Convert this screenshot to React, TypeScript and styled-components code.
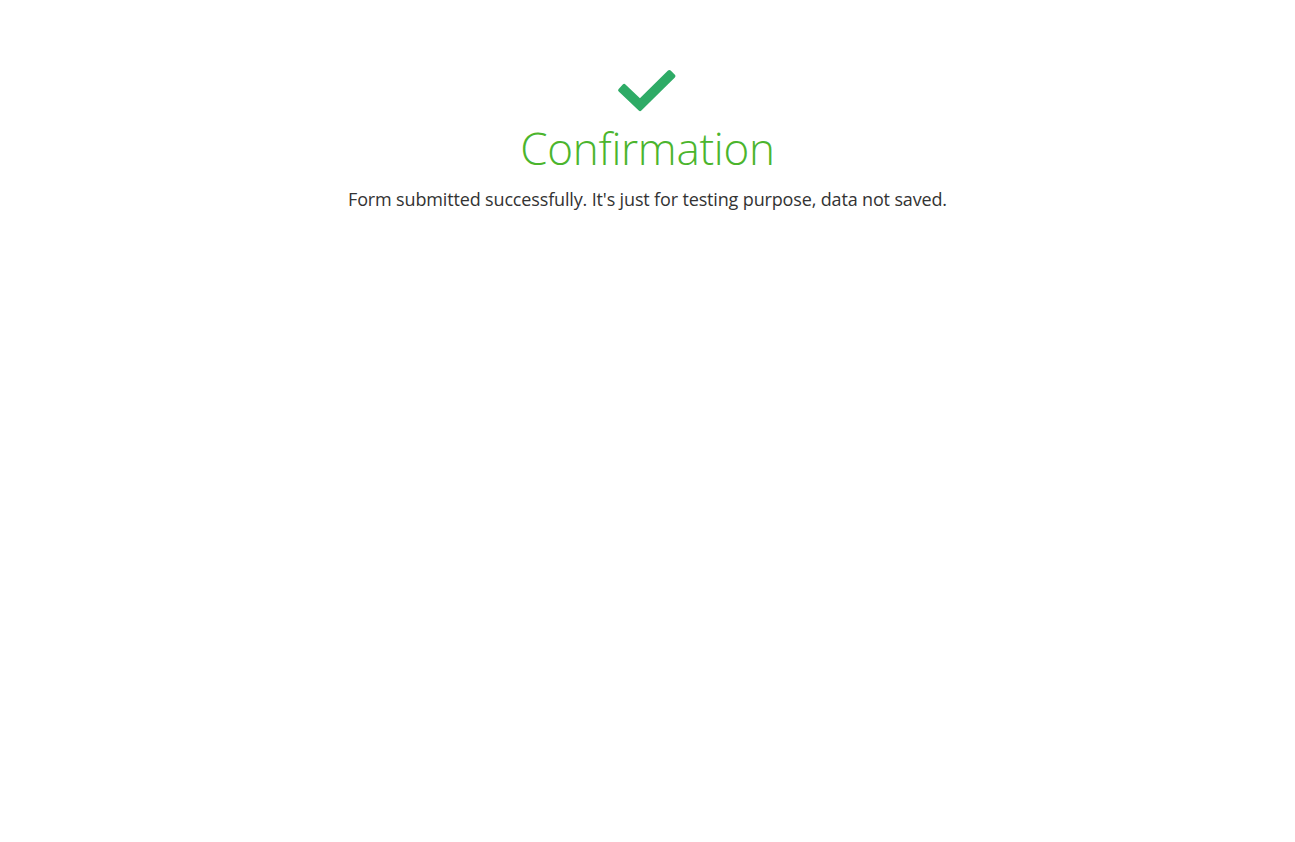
import React from "react";
import styled, { createGlobalStyle } from "styled-components";

const Global = createGlobalStyle`
  html, body { margin: 0; padding: 0; background: #ffffff; }
  body { font-family: "Open Sans", "Noto Sans", sans-serif; color: #333333; }
`;

const Page = styled.main`
  display: flex;
  flex-direction: column;
  align-items: center;
  padding-top: 68px;
`;

const CheckIcon = styled.svg`
  display: block;
  width: 61px;
  height: 48px;
`;

const Title = styled.h1`
  margin: 4px 0 0 0;
  font-family: "Open Sans", "Noto Sans", sans-serif;
  font-weight: 300;
  font-size: 44px;
  line-height: 56px;
  color: #4bb52d;
  letter-spacing: -0.3px;
`;

const Message = styled.p`
  margin: 11px 0 0 0;
  font-family: "Open Sans", "Noto Sans", sans-serif;
  font-size: 18px;
  line-height: 24px;
  color: #333333;
  letter-spacing: -0.15px;
`;

export default function App() {
  return (
    <>
      <Global />
      <Page>
        <CheckIcon viewBox="617 68 61 48">
          <polygon
            points="624.15,85.85 639.96,100.83 669.33,71.91 673.54,76.19 640.04,109.17 620.03,90.21"
            fill="#2eab66"
            stroke="#2eab66"
            strokeWidth="3.8"
            strokeLinejoin="round"
          />
        </CheckIcon>
        <Title>Confirmation</Title>
        <Message>
          Form submitted successfully. It's just for testing purpose, data not saved.
        </Message>
      </Page>
    </>
  );
}
